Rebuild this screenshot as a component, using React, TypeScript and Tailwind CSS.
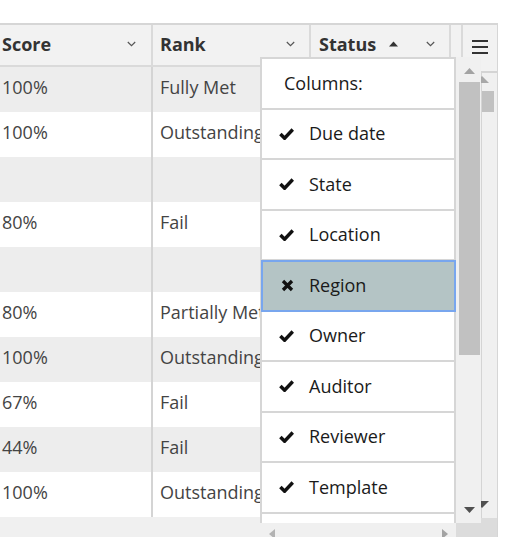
import React from "react";

const rows: { score: string; rank: string }[] = [
  { score: "100%", rank: "Fully Met" },
  { score: "100%", rank: "Outstanding" },
  { score: "", rank: "" },
  { score: "80%", rank: "Fail" },
  { score: "", rank: "" },
  { score: "80%", rank: "Partially Met" },
  { score: "100%", rank: "Outstanding" },
  { score: "67%", rank: "Fail" },
  { score: "44%", rank: "Fail" },
  { score: "100%", rank: "Outstanding" },
];

const columns: { name: string; on: boolean }[] = [
  { name: "Due date", on: true },
  { name: "State", on: true },
  { name: "Location", on: true },
  { name: "Region", on: false },
  { name: "Owner", on: true },
  { name: "Auditor", on: true },
  { name: "Reviewer", on: true },
  { name: "Template", on: true },
  { name: "", on: true },
];

function Chevron() {
  return (
    <svg width="9" height="6" viewBox="0 0 9 6" className="shrink-0">
      <path d="M0.8 1 L4.5 4.6 L8.2 1" fill="none" stroke="#555" strokeWidth="1.2" />
    </svg>
  );
}

function Check() {
  return (
    <svg width="15" height="12" viewBox="0 0 15 12" className="shrink-0">
      <path d="M1.4 6 L5.6 10.2 L13.8 1.5" fill="none" stroke="#111" strokeWidth="3.5" strokeLinejoin="miter" />
    </svg>
  );
}

function Cross() {
  return (
    <span className="flex w-[15px] justify-start pl-[2px]">
      <svg width="13" height="13" viewBox="0 0 13 13" className="shrink-0">
        <path d="M2 2 L11 11 M11 2 L2 11" fill="none" stroke="#111" strokeWidth="3.3" />
      </svg>
    </span>
  );
}

export default function App() {
  return (
    <div
      className="relative w-[512px] h-[537px] overflow-hidden bg-white"
      style={{ fontFamily: '"Open Sans", "Liberation Sans", sans-serif' }}
    >
      <div className="h-[23px]" />
      <div className="w-[498px] h-[514px] border-t-2 border-r border-[#d6d6d6] flex flex-col">
        {/* header */}
        <div className="h-[42px] flex bg-[#f2f2f2] text-[18px] font-bold text-[#333] shrink-0">
          <div className="w-[153px] border-r-2 border-b-2 border-[#dadada] flex items-center justify-between pl-[2px] pr-[15px] pb-[2px]">
            <span>Score</span>
            <Chevron />
          </div>
          <div className="w-[158px] border-r-2 border-b-2 border-[#dadada] flex items-center justify-between pl-[7px] pr-[14px] pb-[2px]">
            <span>Rank</span>
            <Chevron />
          </div>
          <div className="w-[140px] border-r-2 border-b-2 border-[#dadada] flex items-center justify-between pl-[8px] pr-[14px] pb-[2px]">
            <span className="flex items-center gap-[13px]">
              Status
              <svg width="9" height="6" viewBox="0 0 9 6">
                <path d="M0 5.5 L4.5 0.5 L9 5.5 Z" fill="#333" />
              </svg>
            </span>
            <Chevron />
          </div>
          <div className="w-[12px] border-r-2 border-b-2 border-[#dadada]" />
          <div className="flex-1 flex flex-col items-center justify-center gap-[4px] pt-[1px]">
            <span className="block w-[16px] h-[2px] bg-[#333]" />
            <span className="block w-[16px] h-[2px] bg-[#333]" />
            <span className="block w-[16px] h-[2px] bg-[#333]" />
          </div>
        </div>

        {/* body */}
        <div className="flex-1 flex min-h-0">
          <div className="w-[480px] flex flex-col">
            <div className="flex-1 overflow-hidden">
              {rows.map((r, i) => (
                <div
                  key={i}
                  className={
                    "h-[45px] flex text-[18px] text-[#444] " + (i % 2 === 0 ? "bg-[#ededed]" : "bg-white")
                  }
                >
                  <div className="w-[153px] border-r-2 border-[#d4d4d4] flex items-center pl-[2px] pb-[4px]">
                    {r.score}
                  </div>
                  <div className="w-[158px] border-r-2 border-[#d4d4d4] flex items-center pl-[7px] pb-[4px] whitespace-nowrap overflow-hidden">
                    {r.rank}
                  </div>
                  <div className="flex-1" />
                </div>
              ))}
            </div>
            <div className="h-[20px] flex shrink-0">
              <div className="w-[456px] bg-[#f0f0f0] relative">
                <svg width="6" height="10" viewBox="0 0 6 10" className="absolute left-[269px] top-[12px]">
                  <path d="M6 0 L0 5 L6 10 Z" fill="#b3b3b3" />
                </svg>
                <svg width="6" height="10" viewBox="0 0 6 10" className="absolute left-[442px] top-[12px]">
                  <path d="M0 0 L6 5 L0 10 Z" fill="#a3a3a3" />
                </svg>
              </div>
              <div className="flex-1 bg-[#dcdcdc]" />
            </div>
          </div>
          {/* grid vertical scrollbar */}
          <div className="flex-1 flex flex-col">
            <div className="h-[4px] bg-[#f2f2f2]" />
            <div className="flex-1 border-t-2 border-l-2 border-[#d4d4d4] bg-[#f0f0f0] relative">
              <svg width="14" height="7" viewBox="0 0 14 7" className="absolute left-[-7px] top-[3px]">
                <path d="M0 7 L7 0 L14 7 Z" fill="#a8a8a8" />
              </svg>
              <div className="absolute left-0 w-[12px] top-[18px] h-[21px] bg-[#c1c1c1]" />
              <svg width="14" height="7" viewBox="0 0 14 7" className="absolute left-[-7px] bottom-[10px]">
                <path d="M0 0 L14 0 L7 7 Z" fill="#505050" />
              </svg>
            </div>
            <div className="h-[19px] bg-[#dcdcdc]" />
          </div>
        </div>
      </div>

      {/* column chooser menu */}
      <div className="absolute left-[260px] top-[57px] h-[466px] flex z-10">
        <div className="w-[196px] h-full pt-[2px] px-[2px] bg-white overflow-hidden text-[18px] text-[#1a1a1a] shadow-[inset_2px_0_0_#d6d6d6,inset_-2px_0_0_#d6d6d6,inset_0_2px_0_#d6d6d6]">
          <div className="h-[50.5px] border-b-2 border-[#d6d6d6] flex items-center pl-[22px]">
            Columns:
          </div>
          {columns.map((c, i) =>
            c.on ? (
              <div
                key={i}
                className="h-[50.5px] border-b-2 border-[#d6d6d6] flex items-center pl-[17px] gap-[15px]"
              >
                {c.name !== "" && <Check />}
                <span>{c.name}</span>
              </div>
            ) : (
              <div key={i} className="h-[50.5px] relative">
                <div className="absolute left-[-1px] right-[-2px] top-[-1px] bottom-0 border-2 border-[#78a6ee] bg-[#b4c4c5] flex items-center pl-[16px] gap-[15px]">
                  <Cross />
                  <span>{c.name}</span>
                </div>
              </div>
            )
          )}
        </div>
        <div className="w-[25px] h-full bg-[#f0f0f0] relative">
          <svg width="11" height="6" viewBox="0 0 11 6" className="absolute left-[8px] top-[11px]">
            <path d="M0 6 L5.5 0 L11 6 Z" fill="#a3a3a3" />
          </svg>
          <div className="absolute left-[3px] w-[21px] top-[25px] h-[273px] bg-[#c1c1c1]" />
          <svg width="11" height="6" viewBox="0 0 11 6" className="absolute left-[8px] top-[450px]">
            <path d="M0 0 L11 0 L5.5 6 Z" fill="#505050" />
          </svg>
        </div>
      </div>
    </div>
  );
}
